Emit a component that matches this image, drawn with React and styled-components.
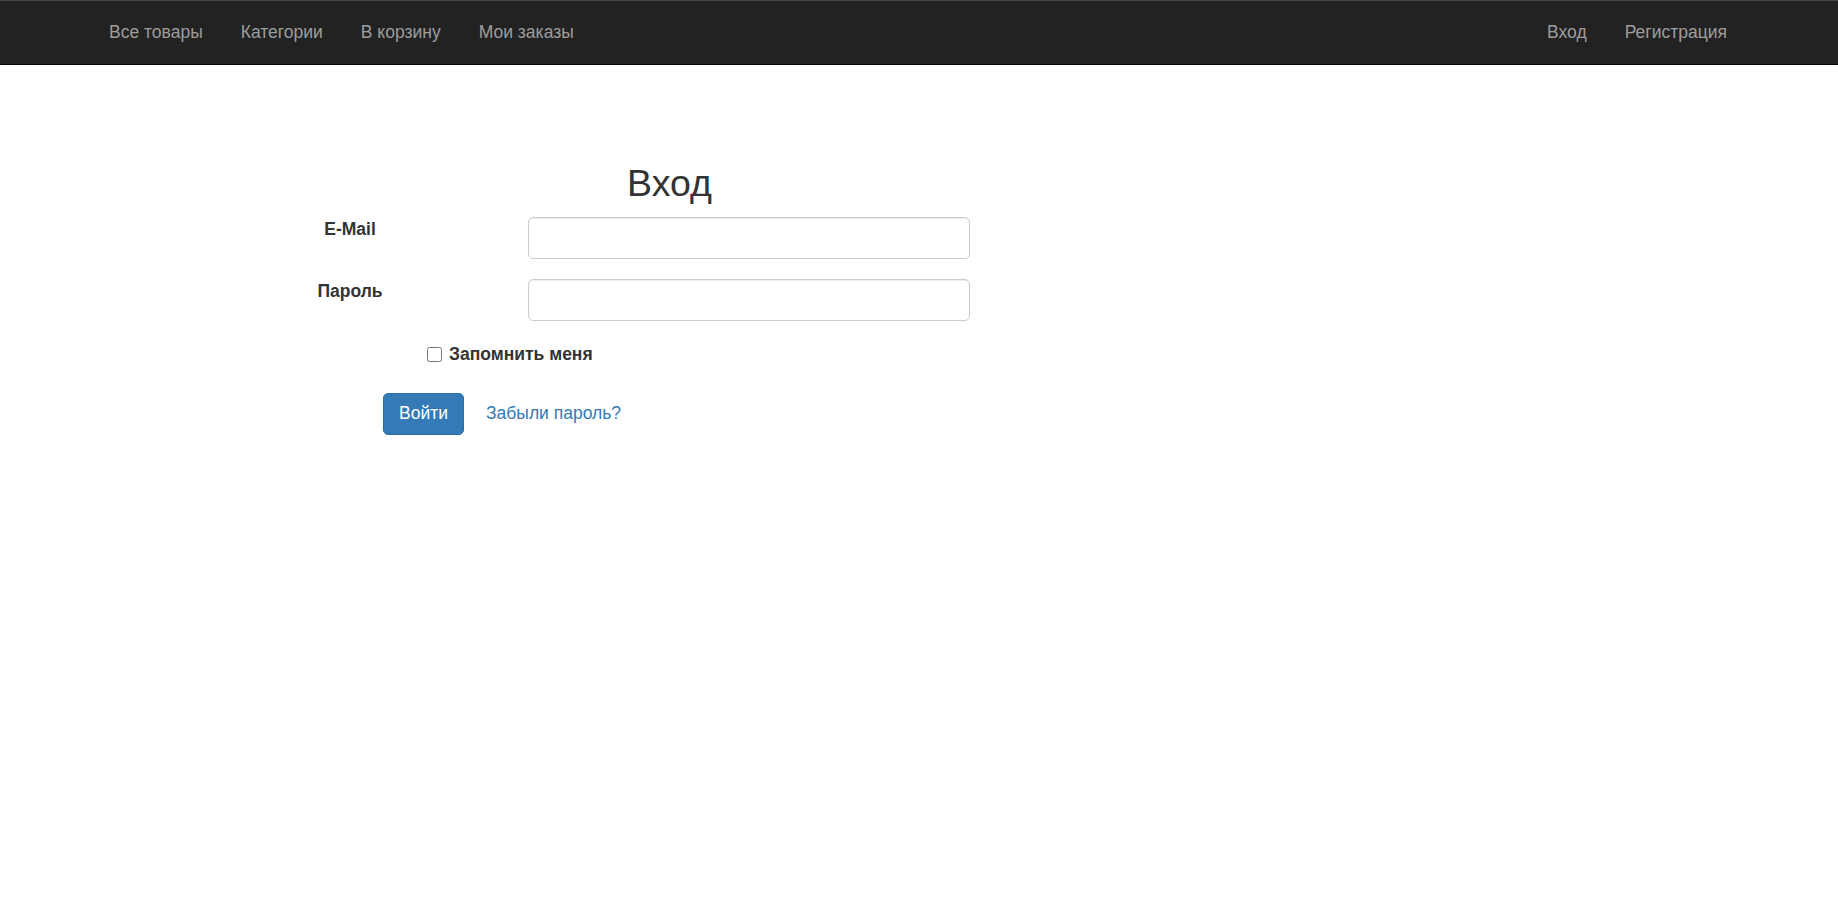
import React, { useState } from 'react'
import styled, { createGlobalStyle } from 'styled-components'

const GlobalStyle = createGlobalStyle`
  body {
    margin: 0;
    background: #fff;
    color: #333;
    font-family: "Liberation Sans", Arial, sans-serif;
    font-size: 17.5px;
    line-height: 1.42857;
  }
  * { box-sizing: border-box; }
`

const Navbar = styled.nav`
  display: flex;
  justify-content: space-between;
  align-items: center;
  height: 65px;
  padding: 0 92px 0 90px;
  background: #222; /* navbar-inverse */
  border-top: 1px solid #484848;
  border-bottom: 1px solid #080808;
`

const NavGroup = styled.ul`
  display: flex;
  margin: 0;
  padding: 0;
  list-style: none;
`

const NavLink = styled.a`
  display: block;
  padding: 0 19px;
  color: #9d9d9d;
  font-size: 17.5px;
  line-height: 25px;
  text-decoration: none;
  cursor: pointer;

  &:hover {
    color: #fff;
  }
`

const Main = styled.main`
  padding: 98px 0 0 172px;
`

const Title = styled.h2`
  width: 995px;
  margin: 0 0 12.5px;
  font-size: 37.5px;
  font-weight: 500;
  line-height: 1.1;
  text-align: center;
`

const FormGrid = styled.div`
  display: grid;
  grid-template-columns: 356px 442px;
  row-gap: 20px;
`

const FieldLabel = styled.label`
  font-weight: bold;
  line-height: 25px;
  text-align: center;
`

const Input = styled.input`
  display: block;
  width: 100%;
  height: 42px;
  padding: 7.5px 15px;
  border: 1px solid #ccc;
  border-radius: 5px;
  box-shadow: inset 0 1px 1px rgba(0, 0, 0, 0.075);
  font: inherit;
  color: #555;
  outline: none;

  &:focus {
    border-color: #66afe9;
  }
`

const CheckRow = styled.label`
  display: flex;
  align-items: center;
  margin: 21.5px 0 0 255px;
  font-weight: bold;
  line-height: 25px;
  cursor: pointer;
`

const Checkbox = styled.input`
  width: 15px;
  height: 15px;
  margin: 0 7px 0 0;
`

const ActionRow = styled.div`
  display: flex;
  align-items: center;
  margin: 25.5px 0 0 211px;
`

const Button = styled.button`
  padding: 7.5px 15px;
  border: 1px solid #2e6da4;
  border-radius: 5px;
  background: #337ab7;
  color: #fff;
  font: inherit;
  line-height: 25px;
  cursor: pointer;

  &:hover {
    background: #286090;
  }
`

const TextLink = styled.a`
  margin-left: 22px;
  color: #337ab7;
  text-decoration: none;
  cursor: pointer;

  &:hover {
    text-decoration: underline;
  }
`

const leftLinks = ['Все товары', 'Категории', 'В корзину', 'Мои заказы']
const rightLinks = ['Вход', 'Регистрация']

const App = () => {
  const [ email, setEmail ] = useState('')
  const [ password, setPassword ] = useState('')
  const [ remember, setRemember ] = useState(false)

  return (
    <>
      <GlobalStyle />
      <Navbar>
        <NavGroup>
          {leftLinks.map((text) => (
            <li key={text}><NavLink>{text}</NavLink></li>
          ))}
        </NavGroup>
        <NavGroup>
          {rightLinks.map((text) => (
            <li key={text}><NavLink>{text}</NavLink></li>
          ))}
        </NavGroup>
      </Navbar>

      <Main>
        <Title>Вход</Title>
        <FormGrid>
          <FieldLabel htmlFor="email">E-Mail</FieldLabel>
          <Input id="email" type="email" value={email} onChange={(e) => setEmail(e.target.value)} />
          <FieldLabel htmlFor="password">Пароль</FieldLabel>
          <Input id="password" type="password" value={password} onChange={(e) => setPassword(e.target.value)} />
        </FormGrid>
        <CheckRow>
          <Checkbox type="checkbox" checked={remember} onChange={() => setRemember(!remember)} />
          Запомнить меня
        </CheckRow>
        <ActionRow>
          <Button type="button">Войти</Button>
          <TextLink>Забыли пароль?</TextLink>
        </ActionRow>
      </Main>
    </>
  )
}

export default App
